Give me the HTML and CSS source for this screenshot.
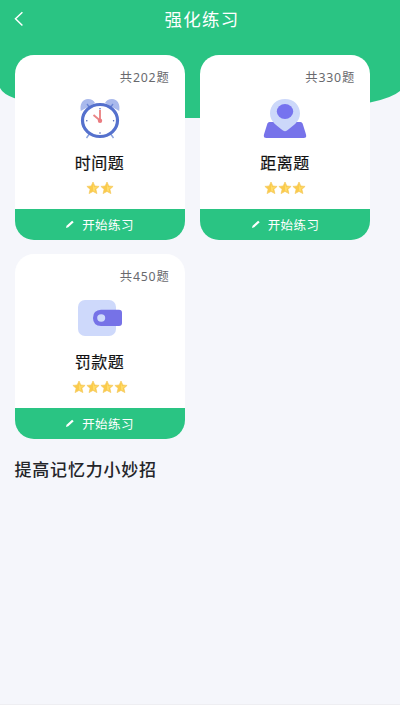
FILE: index.html
```
<!DOCTYPE html>
<html lang="zh-CN">
<head>
<meta charset="utf-8">
<title>强化练习</title>
<link rel="stylesheet" href="styles.css">
</head>
<body>
<svg class="defs" width="0" height="0" aria-hidden="true">
  <symbol id="star" viewBox="0 0 14 14"><path d="M7 1 8.8 5 13.1 5.4 9.9 8.3 10.9 12.6 7 10.4 3.1 12.6 4.1 8.3 .9 5.4 5.2 5Z" fill="#fbcb4b" stroke="#f5ca60" stroke-width=".7" stroke-linejoin="round"/><path d="M7 3 8 6.3 11.6 6 8.7 8 9.5 11 7 9.5Z" fill="#ffdc6a"/></symbol>
  <symbol id="pen" viewBox="0 0 10 10"><path d="M1 9 1.6 6.8 7.1 1.7 8.7 3.2 3.2 8.3Z" fill="#fff"/></symbol>
</svg>
<div class="screen">
  <svg class="hero" viewBox="0 0 400 118" aria-hidden="true"><path d="M0 0H400V91Q392 98 370 102.500Q300 118 200 118Q70 118 14 98Q3 94 0 88Z" fill="#2ac483"/></svg>
  <header class="bar">
    <svg class="back" viewBox="0 0 10 16"><path d="M8.400 1.200 1.500 7.700 8.400 14.500" fill="none" stroke="#fff" stroke-width="1.500"/></svg>
    <h1>强化练习</h1>
  </header>
  <main>
    <section class="grid">
      <article class="card">
        <p class="count">共202题</p>
        <svg class="icon" viewBox="0 0 48 44">
          <path d="M14 36 10.500 41M34 36 37.500 41" stroke="#8ba2dd" stroke-width="1.400"/>
          <path d="M4.800 14C3.500 7 6.500 2 12 2Q17 2 19 6ZM43.200 14C44.500 7 41.500 2 36 2Q31 2 29 6Z" fill="#a9b9ec"/>
          <path d="M11 7 14 11M37 7 34 11" stroke="#6c85d6" stroke-width="1.400"/>
          <ellipse cx="24" cy="23.500" rx="17.500" ry="16" fill="#fff" stroke="#5571cd" stroke-width="3.200"/>
          <path d="M24 13V23.500L17.500 18" fill="none" stroke="#ea8585" stroke-width="1.900"/>
          <circle cx="24" cy="23.700" r="2.200" fill="#ea7b80"/>
          <g fill="#4e63b5"><circle cx="24" cy="11.800" r=".8"/><circle cx="24" cy="36" r=".8"/><circle cx="10.800" cy="23.700" r=".8"/><circle cx="37.600" cy="23.700" r=".8"/></g>
        </svg>
        <h2>时间题</h2>
        <div class="stars"><svg><use href="#star"/></svg><svg><use href="#star"/></svg></div>
        <a class="start"><svg><use href="#pen"/></svg>开始练习</a>
      </article>
      <article class="card">
        <p class="count">共330题</p>
        <svg class="icon" viewBox="0 0 48 44">
          <path d="M8.500 25H39.500Q41 25 41.700 26.800L45 37.500Q46 41 42.500 41H5.500Q2 41 3 37.500L6.300 26.800Q7 25 8.500 25Z" fill="#7773ea"/>
          <path d="M24 2C15.500 2 9 8 9 16.500C9 25 17 29.500 22 33.500Q24 35 26 33.500C31 29.500 39 25 39 16.500C39 8 32.500 2 24 2Z" fill="#ccd8fa"/>
          <ellipse cx="24" cy="14.500" rx="8.200" ry="7.600" fill="#7673ef"/>
        </svg>
        <h2>距离题</h2>
        <div class="stars"><svg><use href="#star"/></svg><svg><use href="#star"/></svg><svg><use href="#star"/></svg></div>
        <a class="start"><svg><use href="#pen"/></svg>开始练习</a>
      </article>
      <article class="card">
        <p class="count">共450题</p>
        <svg class="icon" viewBox="0 0 48 44">
          <rect x="2" y="4" width="38" height="36" rx="7" fill="#ced9fb"/>
          <path d="M25 13.800H43Q46 13.800 46 16.800V27Q46 30 43 30H25Q17 29.500 17 21.900Q17 14.200 25 13.800Z" fill="#7672e7"/>
          <ellipse cx="25.200" cy="22" rx="4" ry="3.700" fill="#ced9fb"/>
        </svg>
        <h2>罚款题</h2>
        <div class="stars"><svg><use href="#star"/></svg><svg><use href="#star"/></svg><svg><use href="#star"/></svg><svg><use href="#star"/></svg></div>
        <a class="start"><svg><use href="#pen"/></svg>开始练习</a>
      </article>
    </section>
    <h3>提高记忆力小妙招</h3>
  </main>
  <footer class="bottom"></footer>
</div>
</body>
</html>
```
FILE: styles.css
```
* { box-sizing: border-box; margin: 0; padding: 0; }
body { background: #f5f6fb; font-family: "Noto Sans CJK SC", sans-serif; }
.defs { position: absolute; }
.screen { position: relative; width: 400px; height: 711px; display: flex; flex-direction: column; overflow: hidden; }
.hero { position: absolute; top: 0; left: 0; width: 400px; height: 118px; }
.bar, main { position: relative; }
.bar { height: 38px; display: grid; grid-template-columns: 40px 1fr 40px; align-items: center; }
.back { width: 10px; height: 16px; margin-left: 14px; }
.bar h1 { font-size: 17.500px; line-height: 38px; font-weight: 400; letter-spacing: 1.200px; text-align: center; color: #fff; padding-left: 4px; }
main { flex: 1; padding: 17px 30px 0 14.500px; }
.grid { display: grid; grid-template-columns: 170px 170px; gap: 14px 15.500px; }
.card { height: 185px; border-radius: 19px; background: #fff; overflow: hidden; display: flex; flex-direction: column; align-items: center; }
.count { align-self: flex-end; margin: 14px 15px 0 0; font-family: "Noto Sans", "Noto Sans CJK SC", sans-serif; font-size: 12.300px; line-height: 18px; letter-spacing: .8px; color: #68696d; }
.icon { width: 48px; height: 44px; margin-top: 10px; }
.card h2 { margin-top: 9px; font-size: 16px; line-height: 25px; font-weight: 400; letter-spacing: .5px; color: #111; -webkit-text-stroke: .2px #111; }
.stars { display: flex; margin-top: 6px; height: 14px; }
.stars svg { width: 14px; height: 14px; }
.start { width: 100%; height: 31px; margin-top: auto; padding-top: 1px; background: #2ac483; color: #fff; display: flex; align-items: center; justify-content: center; gap: 7px; font-size: 12.500px; line-height: 30px; letter-spacing: .4px; }
.start svg { width: 10px; height: 10px; margin-top: -2px; }
h3 { margin-top: 16px; font-size: 17px; line-height: 27px; font-weight: 500; letter-spacing: .8px; color: #242529; }
.bottom { height: 7px; background: #fff; border-top: 1px solid #eeeef2; }
```
